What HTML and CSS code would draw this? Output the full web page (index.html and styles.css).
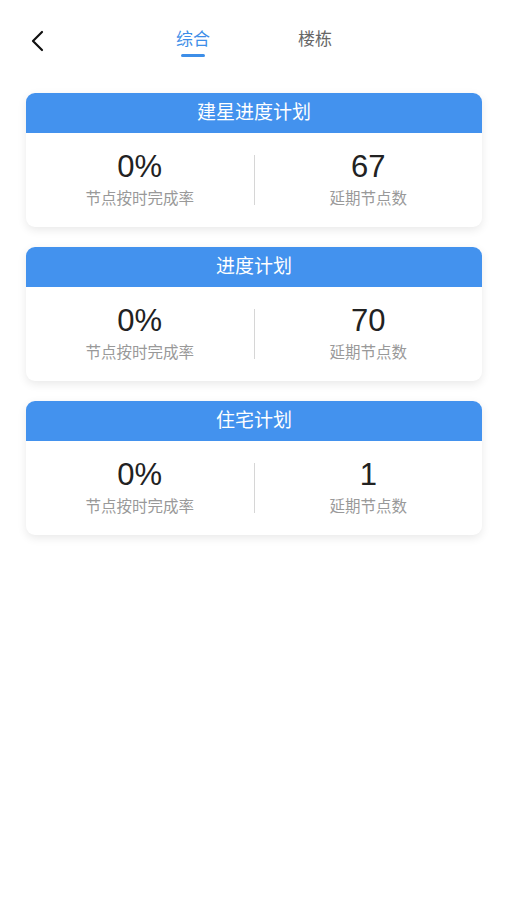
FILE: index.html
```html
<!DOCTYPE html>
<html lang="zh-CN">
<head>
    <meta charset="UTF-8">
    <meta name="viewport" content="width=device-width, initial-scale=1.0">
    <title>综合</title>
    <link rel="stylesheet" href="styles.css">
</head>
<body>

    <!-- Top bar with tabs -->
    <div class="topbar">
        <span class="back">
            <svg width="14" height="22" viewBox="0 0 14 22"><path d="M12 2 L3 11 L12 20" fill="none" stroke="#111" stroke-width="2.2" stroke-linecap="round" stroke-linejoin="round"/></svg>
        </span>
        <div class="tabs">
            <span class="tab active">综合</span>
            <span class="tab">楼栋</span>
        </div>
    </div>

    <div class="list">
        <div class="card">
            <div class="card-title">建星进度计划</div>
            <div class="card-body">
                <div class="stat">
                    <div class="value">0%</div>
                    <div class="label">节点按时完成率</div>
                </div>
                <div class="divider"></div>
                <div class="stat">
                    <div class="value">67</div>
                    <div class="label">延期节点数</div>
                </div>
            </div>
        </div>

        <div class="card">
            <div class="card-title">进度计划</div>
            <div class="card-body">
                <div class="stat">
                    <div class="value">0%</div>
                    <div class="label">节点按时完成率</div>
                </div>
                <div class="divider"></div>
                <div class="stat">
                    <div class="value">70</div>
                    <div class="label">延期节点数</div>
                </div>
            </div>
        </div>

        <div class="card">
            <div class="card-title">住宅计划</div>
            <div class="card-body">
                <div class="stat">
                    <div class="value">0%</div>
                    <div class="label">节点按时完成率</div>
                </div>
                <div class="divider"></div>
                <div class="stat">
                    <div class="value">1</div>
                    <div class="label">延期节点数</div>
                </div>
            </div>
        </div>
    </div>

</body>
</html>
```

FILE: styles.css
```css
body { margin: 0; background: #fff; font-family: "Liberation Sans", "Noto Sans CJK SC", sans-serif; color: #222; }

.topbar { position: relative; height: 80px; }
.back { position: absolute; left: 30px; top: 30px; }
.tabs { display: flex; padding-left: 176px; padding-top: 29px; gap: 88px; }
.tab { font-size: 17px; line-height: 22px; color: #666; position: relative; }
.tab.active { color: #3d8ee8; }
.tab.active::after { content: ""; position: absolute; left: 5px; right: 5px; top: 25px; height: 3px; border-radius: 2px; background: #3d8ee8; }

.list { display: flex; flex-direction: column; gap: 20px; padding: 13px 25px 30px 26px; }
.card { border-radius: 9px; overflow: hidden; background: #fff; box-shadow: 0 3px 10px rgba(0, 0, 0, 0.09); }
.card-title { height: 40px; line-height: 40px; background: #4392ee; color: #fff; text-align: center; font-size: 19px; }
.card-body { display: flex; align-items: center; height: 94px; }
.stat { flex: 1; text-align: center; }
.value { font-size: 31px; line-height: 32px; color: #222; }
.label { font-size: 15.5px; line-height: 20px; color: #999; margin-top: 6px; }
.divider { width: 1px; height: 50px; background: #d6d6d6; }
```
